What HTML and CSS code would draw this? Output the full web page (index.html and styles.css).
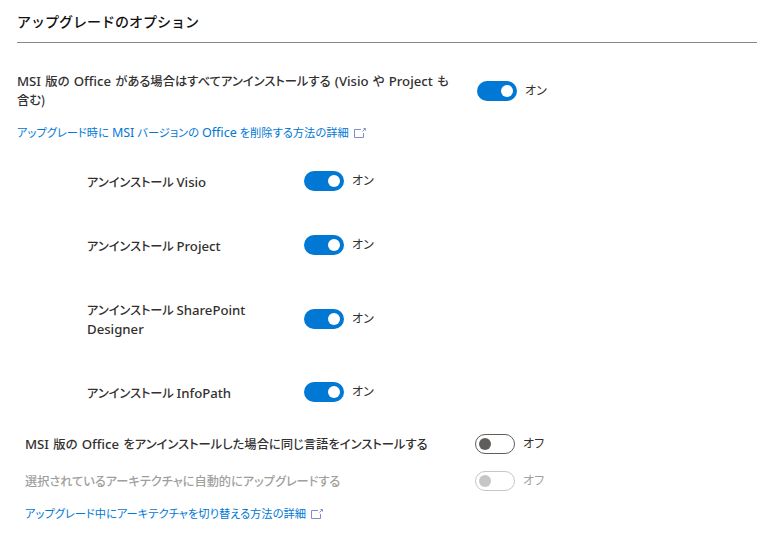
FILE: index.html
```html
<!DOCTYPE html>
<html lang="ja">
<head>
  <meta charset="UTF-8" />
  <title>アップグレードのオプション</title>
  <link rel="stylesheet" href="styles.css">
</head>
<body>
  <div class="panel">
    <h2 class="title">アップグレードのオプション</h2>

    <div class="main-row">
      <div class="main-label"><span class="en">MSI</span> 版の <span class="en">Office</span> がある場合はすべてアンインストールする <span class="en">(Visio</span> や <span class="en">Project</span> も<br>含む)</div>
      <div class="toggle-wrap">
        <span class="toggle on"></span>
        <span class="state">オン</span>
      </div>
    </div>
    <a class="link top-link" href="#">アップグレード時に <span class="en">MSI</span> バージョンの <span class="en">Office</span> を削除する方法の詳細<svg class="ext" width="14" height="12" viewBox="0 0 14 12"><path d="M8 2.5H1.5v8h9V6M9.5 4.5 12 2M10.5 1.5H12.5V3.5" fill="none" stroke="#7d8fc4" stroke-width="1"/></svg></a>

    <div class="sub-list">
      <div class="sub-row visio">
        <div class="sub-label">アンインストール <span class="en">Visio</span></div>
        <div class="toggle-wrap">
          <span class="toggle on"></span>
          <span class="state">オン</span>
        </div>
      </div>
      <div class="sub-row project">
        <div class="sub-label">アンインストール <span class="en">Project</span></div>
        <div class="toggle-wrap">
          <span class="toggle on"></span>
          <span class="state">オン</span>
        </div>
      </div>
      <div class="sub-row sharepoint">
        <div class="sub-label">アンインストール <span class="en">SharePoint</span><br><span class="en">Designer</span></div>
        <div class="toggle-wrap">
          <span class="toggle on"></span>
          <span class="state">オン</span>
        </div>
      </div>
      <div class="sub-row infopath">
        <div class="sub-label">アンインストール <span class="en">InfoPath</span></div>
        <div class="toggle-wrap">
          <span class="toggle on"></span>
          <span class="state">オン</span>
        </div>
      </div>
    </div>

    <div class="bottom">
      <div class="bottom-row">
        <div class="bottom-label"><span class="en">MSI</span> 版の <span class="en">Office</span> をアンインストールした場合に同じ言語をインストールする</div>
        <div class="toggle-wrap">
          <span class="toggle off"></span>
          <span class="state">オフ</span>
        </div>
      </div>
      <div class="bottom-row disabled">
        <div class="bottom-label">選択されているアーキテクチャに自動的にアップグレードする</div>
        <div class="toggle-wrap">
          <span class="toggle off"></span>
          <span class="state">オフ</span>
        </div>
      </div>
      <a class="link" href="#">アップグレード中にアーキテクチャを切り替える方法の詳細<svg class="ext" width="14" height="12" viewBox="0 0 14 12"><path d="M8 2.5H1.5v8h9V6M9.5 4.5 12 2M10.5 1.5H12.5V3.5" fill="none" stroke="#7d8fc4" stroke-width="1"/></svg></a>
    </div>
  </div>
</body>
</html>
```

FILE: styles.css
```css
body {
  margin: 0;
  background: #fff;
  color: #323130;
  font-family: "Noto Sans CJK JP", "Noto Sans", sans-serif;
  font-size: 12.2px;
  font-feature-settings: "palt";
}

.en {
  font-family: "Noto Sans", sans-serif;
  font-size: 13.2px;
}

.panel {
  width: 740px;
  margin-left: 17px;
  padding-top: 11px;
}

.title {
  margin: 0;
  height: 31px;
  border-bottom: 1px solid #8a8886;
  font-size: 14px;
  font-weight: 500;
  font-feature-settings: normal;
  line-height: 20px;
  color: #111;
}

.main-row {
  display: flex;
  align-items: center;
  margin-top: 29px;
}

.main-label {
  width: 460px;
  font-size: 12.3px;
  word-spacing: 1.5px;
  line-height: 19px;
  font-weight: 500;
}

.toggle-wrap {
  display: flex;
  align-items: center;
  gap: 8px;
  height: 20px;
}

.toggle {
  position: relative;
  box-sizing: border-box;
  width: 40px;
  height: 20px;
  border-radius: 10px;
}

.toggle::after {
  content: "";
  position: absolute;
  top: 4px;
  width: 12px;
  height: 12px;
  border-radius: 50%;
}

.toggle.on {
  background: #0078d4;
}

.toggle.on::after {
  right: 4px;
  background: #fff;
}

.toggle.off {
  border: 1px solid #605e5c;
  background: #fff;
}

.toggle.off::after {
  top: 3px;
  left: 3px;
  background: #605e5c;
}

.state {
  margin-bottom: 2px;
  font-size: 12px;
  line-height: 18px;
}

.link {
  display: block;
  color: #0078d4;
  text-decoration: none;
  font-size: 11.25px;
  word-spacing: 0.5px;
  line-height: 18px;
}

.link .en {
  font-size: 12.5px;
  font-weight: 400;
}

.ext {
  margin-left: 4px;
  vertical-align: -2px;
}

.top-link {
  margin-top: 13px;
}

.sub-list {
  margin-left: 70px;
}

.sub-row {
  display: flex;
  align-items: center;
}

.sub-label {
  width: 217px;
  padding-top: 2px;
  line-height: 19px;
  font-weight: 500;
}

.visio {
  margin-top: 28.5px;
}

.project {
  margin-top: 43px;
}

.sharepoint {
  margin-top: 43.5px;
}

.infopath {
  margin-top: 42.5px;
}

.bottom {
  margin-top: 31.5px;
  margin-left: 8px;
}

.bottom-row {
  display: flex;
  align-items: center;
  height: 20px;
  margin-bottom: 17px;
}

.bottom-label {
  width: 450px;
  font-size: 12.3px;
  word-spacing: 1.5px;
  font-weight: 500;
}

.disabled {
  margin-bottom: 13px;
}

.disabled .bottom-label,
.disabled .state {
  color: #a19f9d;
}

.disabled .bottom-label {
  font-size: 12.2px;
}

.disabled .toggle {
  border-color: #c8c6c4;
}

.disabled .toggle::after {
  background: #c8c6c4;
}
```
